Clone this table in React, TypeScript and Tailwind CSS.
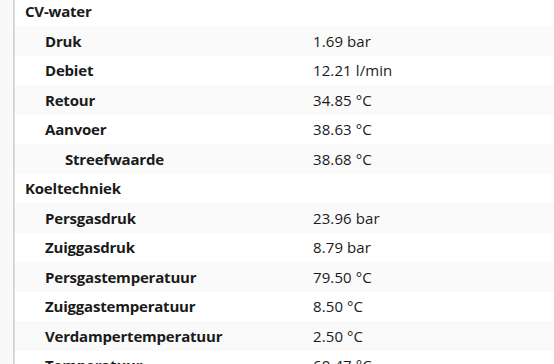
import React from "react";

interface Row {
  label: string;
  value?: string;
  level: number;
}

const rows: Row[] = [
  { label: "CV-water", level: 0 },
  { label: "Druk", value: "1.69 bar", level: 1 },
  { label: "Debiet", value: "12.21 l/min", level: 1 },
  { label: "Retour", value: "34.85 °C", level: 1 },
  { label: "Aanvoer", value: "38.63 °C", level: 1 },
  { label: "Streefwaarde", value: "38.68 °C", level: 2 },
  { label: "Koeltechniek", level: 0 },
  { label: "Persgasdruk", value: "23.96 bar", level: 1 },
  { label: "Zuiggasdruk", value: "8.79 bar", level: 1 },
  { label: "Persgastemperatuur", value: "79.50 °C", level: 1 },
  { label: "Zuiggastemperatuur", value: "8.50 °C", level: 1 },
  { label: "Verdampertemperatuur", value: "2.50 °C", level: 1 },
  { label: "Temperatuur", value: "60.47 °C", level: 1 },
];

const indent = ["pl-[10px]", "pl-[30px]", "pl-[50px]"];

export default function App() {
  return (
    <div
      className="flex h-[364px] w-[554px] overflow-hidden bg-white text-[15px] text-[#1a1a1a]"
      style={{ fontFamily: '"Open Sans", "Noto Sans", sans-serif' }}
    >
      {/* side strip */}
      <div className="w-[13px] shrink-0 bg-[#f9f9f9]" />
      <div className="w-[2px] shrink-0 bg-gradient-to-r from-[#c8c8c8] to-[#e8e8e8]" />
      <div className="flex-1 -mt-[3.5px]">
        {rows.map((r, i) => (
          <div
            key={r.label}
            className={
              "grid h-[29.5px] grid-cols-[298px_1fr] items-center " +
              (i % 2 === 1 ? "bg-[#fafafa]" : "bg-white")
            }
          >
            <div className={"font-bold tracking-[-0.2px] " + indent[r.level]}>
              {r.label}
            </div>
            <div className="tracking-[0.1px]">{r.value}</div>
          </div>
        ))}
      </div>
    </div>
  );
}
